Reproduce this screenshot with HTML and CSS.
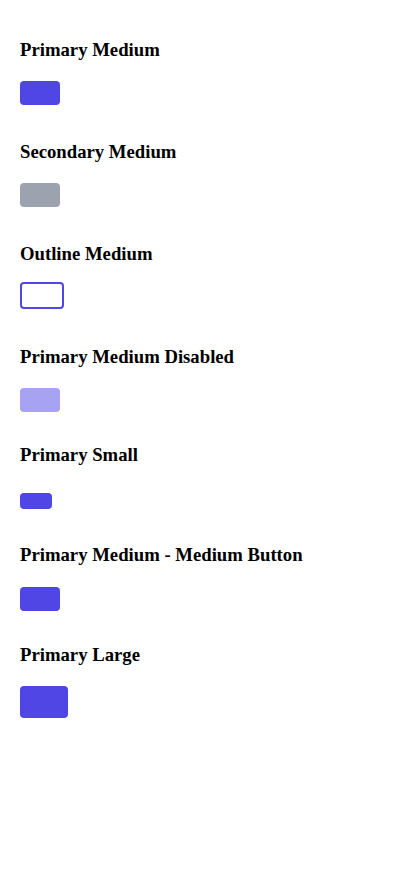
FILE: index.html
```html
<!DOCTYPE html>
<html lang="en">
<head>
<meta charset="utf-8">
<title>Buttons</title>
<link rel="stylesheet" href="styles.css">
</head>
<body>
<main class="page">
  <section class="section">
    <h3 class="title">Primary Medium</h3>
    <div class="row"><button class="btn btn-primary btn-md" type="button"></button></div>
  </section>
  <section class="section">
    <h3 class="title">Secondary Medium</h3>
    <div class="row"><button class="btn btn-secondary btn-md" type="button"></button></div>
  </section>
  <section class="section section-outline">
    <h3 class="title">Outline Medium</h3>
    <div class="row"><button class="btn btn-outline btn-outline-md" type="button"></button></div>
  </section>
  <section class="section section-disabled">
    <h3 class="title">Primary Medium Disabled</h3>
    <div class="row"><button class="btn btn-disabled btn-md" type="button" disabled></button></div>
  </section>
  <section class="section section-small">
    <h3 class="title">Primary Small</h3>
    <div class="row row-sm"><button class="btn btn-primary btn-sm" type="button"></button></div>
  </section>
  <section class="section section-medium">
    <h3 class="title">Primary Medium - Medium Button</h3>
    <div class="row"><button class="btn btn-primary btn-md" type="button"></button></div>
  </section>
  <section class="section">
    <h3 class="title">Primary Large</h3>
    <div class="row row-lg"><button class="btn btn-primary btn-lg" type="button"></button></div>
  </section>
</main>
</body>
</html>
```
FILE: styles.css
```css
html, body {
  margin: 0;
  padding: 0;
  background: #ffffff;
}

body {
  font-family: "Liberation Serif", "Times New Roman", serif;
  color: #000000;
}

.page {
  padding: 39px 20px 20px;
  display: flex;
  flex-direction: column;
}

.section {
  display: flex;
  flex-direction: column;
  margin-bottom: 36px;
}

.section-outline {
  margin-bottom: 37px;
}

.section-disabled {
  margin-bottom: 32px;
}

.section-small {
  margin-bottom: 35px;
}

.section-medium {
  margin-bottom: 33px;
}

.title {
  margin: 0 0 20px;
  font-size: 18.72px;
  line-height: 22px;
  font-weight: bold;
}

.section-medium .title {
  margin-bottom: 21px;
}

.row {
  height: 24px;
  display: flex;
  align-items: flex-end;
}

.row-sm {
  height: 23px;
}

.row-lg {
  height: 32px;
}

.btn {
  display: block;
  margin: 0;
  padding: 0;
  border: none;
  border-radius: 4px;
  flex: none;
}

.btn-md {
  width: 40px;
  height: 24px;
}

.btn-sm {
  width: 32px;
  height: 16px;
}

.btn-lg {
  width: 48px;
  height: 32px;
}

.btn-primary {
  background: #4f46e5;
}

.btn-secondary {
  background: #9ca3af;
}

.btn-disabled {
  background: #a7a3f2;
}

.btn-outline {
  background: #ffffff;
  border: 2px solid #4f46e5;
  border-radius: 4px;
}

.btn-outline-md {
  width: 44px;
  height: 27px;
}
```
